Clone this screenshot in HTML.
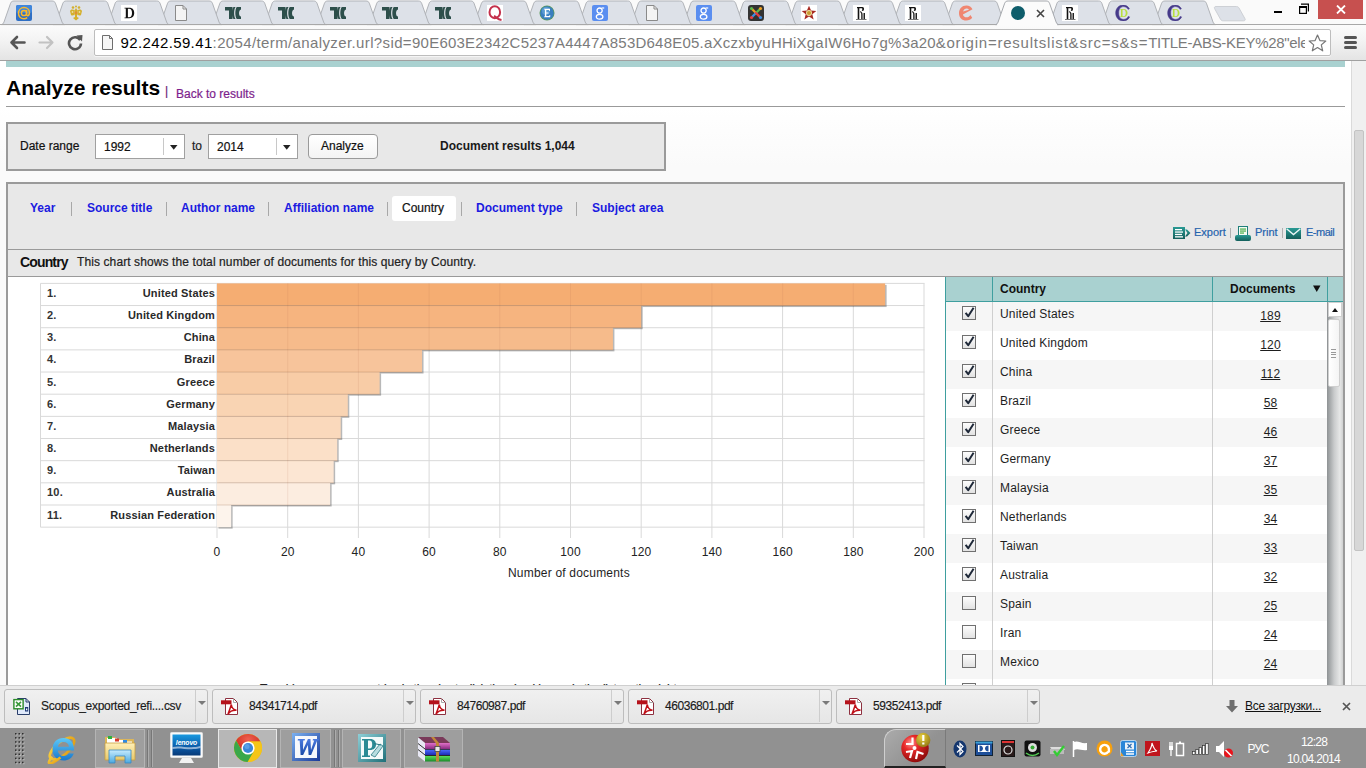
<!DOCTYPE html><html><head><meta charset="utf-8"><style>
*{box-sizing:border-box}
html,body{margin:0;padding:0;width:1366px;height:768px;overflow:hidden;background:#fff;font-family:"Liberation Sans",sans-serif}
.a{position:absolute}
.t{position:absolute;white-space:nowrap;line-height:1}
#frame{left:0;top:0;width:1366px;height:25px;background:#fafafa}
#toolbar{left:0;top:24px;width:1366px;height:37px;background:linear-gradient(#fbfbfb,#f3f3f3 45%,#e4e4e4);border-top:1px solid #a8a8a8;border-bottom:1px solid #a0a0a0}
#omni{left:94px;top:29px;width:1237px;height:27px;background:#fff;border:1px solid #bdbdbd;border-radius:2px;overflow:hidden;box-shadow:0 1px 0 rgba(255,255,255,.6)}
#url{left:25px;top:4px;font-size:15px;color:#7b7b7b;white-space:nowrap;letter-spacing:0.14px;line-height:17px}
#url b{font-weight:normal;color:#000}
#page{left:0;top:61px;width:1366px;height:624px;background:#fff;overflow:hidden}
#page .t:not([style*="bold"]){-webkit-text-stroke:0.2px currentColor}
#shelf{left:0;top:685px;width:1366px;height:43px;background:#ebebeb;border-top:1px solid #cfcfcf}
#taskbar{left:0;top:728px;width:1366px;height:40px;background:#919191}
.dl{position:absolute;top:3px;height:35px;width:204px;border:1px solid #bdbdbd;border-radius:3px;background:linear-gradient(#f0f0f0,#e6e6e6)}
.dl .nm{position:absolute;left:36px;top:9px;-webkit-text-stroke:0.15px currentColor;font-size:12px;line-height:14px;color:#1a1a1a;letter-spacing:-0.45px}
.dl .dv{position:absolute;left:190px;top:0;width:1px;height:32px;background:#cdcdcd}
.dl .ar{position:absolute;left:193px;top:11px;width:0;height:0;border-left:4px solid transparent;border-right:4px solid transparent;border-top:4px solid #7a7a7a}
.tb{position:absolute;top:1px;height:39px;border:1px solid #a9a9a9;background:rgba(255,255,255,.18)}
</style></head><body>
<div id="frame" class="a"></div>
<div id="toolbar" class="a"></div>
<svg class="a" style="left:0;top:0" width="1366" height="26" viewBox="0 0 1366 26"><path d="M1152.0,24.6 C1153.5,24.6 1154.4,23.6 1155.0,22 L1161.6,3.2 C1162.2,1.7 1163.2,1 1165.0,1 L1203.0,1 C1204.8,1 1205.8,1.7 1206.4,3.2 L1213.0,22 C1213.6,23.6 1214.5,24.6 1216.0,24.6 Z" fill="#dde1e8" stroke="#b0b3b8" stroke-width="1"/><path d="M1099.7,24.6 C1101.2,24.6 1102.1,23.6 1102.7,22 L1109.3,3.2 C1109.9,1.7 1110.9,1 1112.7,1 L1150.7,1 C1152.5,1 1153.5,1.7 1154.1,3.2 L1160.7,22 C1161.3,23.6 1162.2,24.6 1163.7,24.6 Z" fill="#dde1e8" stroke="#b0b3b8" stroke-width="1"/><path d="M1047.4,24.6 C1048.9,24.6 1049.8,23.6 1050.4,22 L1057.0,3.2 C1057.6,1.7 1058.6,1 1060.4,1 L1098.4,1 C1100.2,1 1101.2,1.7 1101.8,3.2 L1108.4,22 C1109.0,23.6 1109.9,24.6 1111.4,24.6 Z" fill="#dde1e8" stroke="#b0b3b8" stroke-width="1"/><path d="M942.8,24.6 C944.3,24.6 945.2,23.6 945.8,22 L952.4,3.2 C953.0,1.7 954.0,1 955.8,1 L993.8,1 C995.6,1 996.6,1.7 997.2,3.2 L1003.8,22 C1004.4,23.6 1005.3,24.6 1006.8,24.6 Z" fill="#dde1e8" stroke="#b0b3b8" stroke-width="1"/><path d="M890.4,24.6 C891.9,24.6 892.8,23.6 893.4,22 L900.0,3.2 C900.6,1.7 901.6,1 903.4,1 L941.4,1 C943.2,1 944.2,1.7 944.8,3.2 L951.4,22 C952.0,23.6 952.9,24.6 954.4,24.6 Z" fill="#dde1e8" stroke="#b0b3b8" stroke-width="1"/><path d="M838.1,24.6 C839.6,24.6 840.5,23.6 841.1,22 L847.7,3.2 C848.3,1.7 849.3,1 851.1,1 L889.1,1 C890.9,1 891.9,1.7 892.5,3.2 L899.1,22 C899.7,23.6 900.6,24.6 902.1,24.6 Z" fill="#dde1e8" stroke="#b0b3b8" stroke-width="1"/><path d="M785.8,24.6 C787.3,24.6 788.2,23.6 788.8,22 L795.4,3.2 C796.0,1.7 797.0,1 798.8,1 L836.8,1 C838.6,1 839.6,1.7 840.2,3.2 L846.8,22 C847.4,23.6 848.3,24.6 849.8,24.6 Z" fill="#dde1e8" stroke="#b0b3b8" stroke-width="1"/><path d="M733.5,24.6 C735.0,24.6 735.9,23.6 736.5,22 L743.1,3.2 C743.7,1.7 744.7,1 746.5,1 L784.5,1 C786.3,1 787.3,1.7 787.9,3.2 L794.5,22 C795.1,23.6 796.0,24.6 797.5,24.6 Z" fill="#dde1e8" stroke="#b0b3b8" stroke-width="1"/><path d="M681.2,24.6 C682.7,24.6 683.6,23.6 684.2,22 L690.8,3.2 C691.4,1.7 692.4,1 694.2,1 L732.2,1 C734.0,1 735.0,1.7 735.6,3.2 L742.2,22 C742.8,23.6 743.7,24.6 745.2,24.6 Z" fill="#dde1e8" stroke="#b0b3b8" stroke-width="1"/><path d="M628.8,24.6 C630.3,24.6 631.2,23.6 631.8,22 L638.4,3.2 C639.0,1.7 640.0,1 641.8,1 L679.8,1 C681.6,1 682.6,1.7 683.2,3.2 L689.8,22 C690.4,23.6 691.3,24.6 692.8,24.6 Z" fill="#dde1e8" stroke="#b0b3b8" stroke-width="1"/><path d="M576.5,24.6 C578.0,24.6 578.9,23.6 579.5,22 L586.1,3.2 C586.7,1.7 587.7,1 589.5,1 L627.5,1 C629.3,1 630.3,1.7 630.9,3.2 L637.5,22 C638.1,23.6 639.0,24.6 640.5,24.6 Z" fill="#dde1e8" stroke="#b0b3b8" stroke-width="1"/><path d="M524.2,24.6 C525.7,24.6 526.6,23.6 527.2,22 L533.8,3.2 C534.4,1.7 535.4,1 537.2,1 L575.2,1 C577.0,1 578.0,1.7 578.6,3.2 L585.2,22 C585.8,23.6 586.7,24.6 588.2,24.6 Z" fill="#dde1e8" stroke="#b0b3b8" stroke-width="1"/><path d="M471.9,24.6 C473.4,24.6 474.3,23.6 474.9,22 L481.5,3.2 C482.1,1.7 483.1,1 484.9,1 L522.9,1 C524.7,1 525.7,1.7 526.3,3.2 L532.9,22 C533.5,23.6 534.4,24.6 535.9,24.6 Z" fill="#dde1e8" stroke="#b0b3b8" stroke-width="1"/><path d="M419.6,24.6 C421.1,24.6 422.0,23.6 422.6,22 L429.2,3.2 C429.8,1.7 430.8,1 432.6,1 L470.6,1 C472.4,1 473.4,1.7 474.0,3.2 L480.6,22 C481.2,23.6 482.1,24.6 483.6,24.6 Z" fill="#dde1e8" stroke="#b0b3b8" stroke-width="1"/><path d="M367.2,24.6 C368.7,24.6 369.6,23.6 370.2,22 L376.8,3.2 C377.4,1.7 378.4,1 380.2,1 L418.2,1 C420.0,1 421.0,1.7 421.6,3.2 L428.2,22 C428.8,23.6 429.7,24.6 431.2,24.6 Z" fill="#dde1e8" stroke="#b0b3b8" stroke-width="1"/><path d="M314.9,24.6 C316.4,24.6 317.3,23.6 317.9,22 L324.5,3.2 C325.1,1.7 326.1,1 327.9,1 L365.9,1 C367.7,1 368.7,1.7 369.3,3.2 L375.9,22 C376.5,23.6 377.4,24.6 378.9,24.6 Z" fill="#dde1e8" stroke="#b0b3b8" stroke-width="1"/><path d="M262.6,24.6 C264.1,24.6 265.0,23.6 265.6,22 L272.2,3.2 C272.8,1.7 273.8,1 275.6,1 L313.6,1 C315.4,1 316.4,1.7 317.0,3.2 L323.6,22 C324.2,23.6 325.1,24.6 326.6,24.6 Z" fill="#dde1e8" stroke="#b0b3b8" stroke-width="1"/><path d="M210.3,24.6 C211.8,24.6 212.7,23.6 213.3,22 L219.9,3.2 C220.5,1.7 221.5,1 223.3,1 L261.3,1 C263.1,1 264.1,1.7 264.7,3.2 L271.3,22 C271.9,23.6 272.8,24.6 274.3,24.6 Z" fill="#dde1e8" stroke="#b0b3b8" stroke-width="1"/><path d="M158.0,24.6 C159.5,24.6 160.4,23.6 161.0,22 L167.6,3.2 C168.2,1.7 169.2,1 171.0,1 L209.0,1 C210.8,1 211.8,1.7 212.4,3.2 L219.0,22 C219.6,23.6 220.5,24.6 222.0,24.6 Z" fill="#dde1e8" stroke="#b0b3b8" stroke-width="1"/><path d="M105.6,24.6 C107.1,24.6 108.0,23.6 108.6,22 L115.2,3.2 C115.8,1.7 116.8,1 118.6,1 L156.6,1 C158.4,1 159.4,1.7 160.0,3.2 L166.6,22 C167.2,23.6 168.1,24.6 169.6,24.6 Z" fill="#dde1e8" stroke="#b0b3b8" stroke-width="1"/><path d="M53.3,24.6 C54.8,24.6 55.7,23.6 56.3,22 L62.9,3.2 C63.5,1.7 64.5,1 66.3,1 L104.3,1 C106.1,1 107.1,1.7 107.7,3.2 L114.3,22 C114.9,23.6 115.8,24.6 117.3,24.6 Z" fill="#dde1e8" stroke="#b0b3b8" stroke-width="1"/><path d="M1.0,24.6 C2.5,24.6 3.4,23.6 4.0,22 L10.6,3.2 C11.2,1.7 12.2,1 14.0,1 L52.0,1 C53.8,1 54.8,1.7 55.4,3.2 L62.0,22 C62.6,23.6 63.5,24.6 65.0,24.6 Z" fill="#dde1e8" stroke="#b0b3b8" stroke-width="1"/><line x1="0" y1="24.5" x2="1366" y2="24.5" stroke="#a8a8a8" stroke-width="1"/><path d="M995.1,24.6 C996.6,24.6 997.5,23.6 998.1,22 L1004.7,3.2 C1005.3,1.7 1006.3,1 1008.1,1 L1046.1,1 C1047.9,1 1048.9,1.7 1049.5,3.2 L1056.1,22 C1056.7,23.6 1057.6,24.6 1059.1,24.6 Z" fill="#fbfbfb" stroke="#a6a9ae" stroke-width="1"/><rect x="997.1" y="24" width="60" height="2" fill="#fbfbfb"/><path d="M1216,6.5 C1214.5,6.5 1214,7.5 1214.6,8.6 L1220.6,19.4 C1221.2,20.4 1222,20.8 1223.2,20.8 L1243.5,20.8 C1245,20.8 1245.6,19.8 1245,18.8 L1239,8 C1238.4,7 1237.6,6.5 1236.4,6.5 Z" fill="#dde1e8" stroke="#cdd0d5" stroke-width="1"/></svg>
<svg class="a" style="left:16px;top:5px" width="16" height="16" viewBox="0 0 16 16"><rect x="0" y="0" width="16" height="16" rx="2" fill="#2f6fc4"/><rect x="0" y="0" width="16" height="8" rx="2" fill="#3f86dc"/><path d="M11.2,12.6 C10.2,13.3 9.2,13.7 8,13.7 C4.8,13.7 2.5,11.3 2.5,8.2 C2.5,5 4.9,2.6 8,2.6 C11.1,2.6 13.4,4.8 13.4,7.6 C13.4,9.6 12.5,10.8 11.5,10.8 C10.7,10.8 10.6,10.1 10.6,9.2 V5" fill="none" stroke="#fbb829" stroke-width="1.5"/><circle cx="8" cy="8" r="2.6" fill="none" stroke="#fbb829" stroke-width="1.5"/></svg>
<svg class="a" style="left:68px;top:5px" width="16" height="16" viewBox="0 0 16 16"><g fill="#d4b02c"><path d="M8,3 L9.5,5.5 L9,12 L8,14 L7,12 L6.5,5.5 Z"/><path d="M6.5,5 C4,4 2.5,4.5 2,6 L3,10 C4,11 5.5,10.5 6.8,9.5 Z"/><path d="M9.5,5 C12,4 13.5,4.5 14,6 L13,10 C12,11 10.5,10.5 9.2,9.5 Z"/><circle cx="5" cy="2.5" r="1.3"/><circle cx="11" cy="2.5" r="1.3"/><circle cx="8" cy="1.5" r="1"/><path d="M5,13 L8,11.5 L11,13 L8,15.5 Z"/></g><g fill="#fff" opacity=".55"><circle cx="4.5" cy="7" r=".9"/><circle cx="11.5" cy="7" r=".9"/></g><circle cx="8" cy="8" r="1.4" fill="#e09030"/></svg>
<svg class="a" style="left:121px;top:5px" width="16" height="16" viewBox="0 0 16 16"><rect x="0" y="0" width="16" height="16" fill="#fff"/><path d="M3.5,2.8 H8.3 C11.6,2.8 13.2,5 13.2,8 C13.2,11 11.6,13.2 8.3,13.2 H3.5 V12.4 H4.8 V3.6 H3.5 Z M6.9,3.7 V12.3 H8.2 C10.2,12.3 11,10.6 11,8 C11,5.4 10.2,3.7 8.2,3.7 Z" fill="#111"/></svg>
<svg class="a" style="left:173px;top:5px" width="16" height="16" viewBox="0 0 16 16"><path d="M2.5,0.5 H10 L13.5,4 V15.5 H2.5 Z" fill="#f4f4f4" stroke="#8a8a8a"/><path d="M10,0.5 V4 H13.5" fill="none" stroke="#8a8a8a"/></svg>
<svg class="a" style="left:225px;top:5px" width="16" height="16" viewBox="0 0 16 16"><path d="M0,2 H7.5 V14 H4 V5.5 H0 Z" fill="#2d4f4b"/><path d="M8.6,2 C6.3,4.3 6.3,11.7 8.6,14 H10.6 C8.6,11.7 8.6,4.3 10.6,2 Z" fill="#2d4f4b"/><path d="M11.8,2 C9.8,4.3 9.8,11.7 11.8,14 H16 V11.6 C13.4,11 13.4,5 16,4.4 V2 Z" fill="#2d4f4b"/></svg>
<svg class="a" style="left:278px;top:5px" width="16" height="16" viewBox="0 0 16 16"><path d="M0,2 H7.5 V14 H4 V5.5 H0 Z" fill="#2d4f4b"/><path d="M8.6,2 C6.3,4.3 6.3,11.7 8.6,14 H10.6 C8.6,11.7 8.6,4.3 10.6,2 Z" fill="#2d4f4b"/><path d="M11.8,2 C9.8,4.3 9.8,11.7 11.8,14 H16 V11.6 C13.4,11 13.4,5 16,4.4 V2 Z" fill="#2d4f4b"/></svg>
<svg class="a" style="left:330px;top:5px" width="16" height="16" viewBox="0 0 16 16"><path d="M0,2 H7.5 V14 H4 V5.5 H0 Z" fill="#2d4f4b"/><path d="M8.6,2 C6.3,4.3 6.3,11.7 8.6,14 H10.6 C8.6,11.7 8.6,4.3 10.6,2 Z" fill="#2d4f4b"/><path d="M11.8,2 C9.8,4.3 9.8,11.7 11.8,14 H16 V11.6 C13.4,11 13.4,5 16,4.4 V2 Z" fill="#2d4f4b"/></svg>
<svg class="a" style="left:382px;top:5px" width="16" height="16" viewBox="0 0 16 16"><path d="M0,2 H7.5 V14 H4 V5.5 H0 Z" fill="#2d4f4b"/><path d="M8.6,2 C6.3,4.3 6.3,11.7 8.6,14 H10.6 C8.6,11.7 8.6,4.3 10.6,2 Z" fill="#2d4f4b"/><path d="M11.8,2 C9.8,4.3 9.8,11.7 11.8,14 H16 V11.6 C13.4,11 13.4,5 16,4.4 V2 Z" fill="#2d4f4b"/></svg>
<svg class="a" style="left:435px;top:5px" width="16" height="16" viewBox="0 0 16 16"><path d="M0,2 H7.5 V14 H4 V5.5 H0 Z" fill="#2d4f4b"/><path d="M8.6,2 C6.3,4.3 6.3,11.7 8.6,14 H10.6 C8.6,11.7 8.6,4.3 10.6,2 Z" fill="#2d4f4b"/><path d="M11.8,2 C9.8,4.3 9.8,11.7 11.8,14 H16 V11.6 C13.4,11 13.4,5 16,4.4 V2 Z" fill="#2d4f4b"/></svg>
<svg class="a" style="left:487px;top:5px" width="16" height="16" viewBox="0 0 16 16"><rect width="16" height="16" fill="#fff"/><ellipse cx="7.8" cy="7.2" rx="5.3" ry="6" fill="none" stroke="#c4304c" stroke-width="2"/><path d="M7,11 C9,12 11,14.5 14.5,15" fill="none" stroke="#c4304c" stroke-width="2"/></svg>
<svg class="a" style="left:539px;top:5px" width="16" height="16" viewBox="0 0 16 16"><circle cx="8" cy="8" r="7.5" fill="#5a9a5a"/><circle cx="8" cy="8" r="6.8" fill="#3a7fc0"/><circle cx="7" cy="6" r="4" fill="#6aaee0" opacity=".6"/><path d="M5,3.8 H11 V6 H10.2 V5 H7.3 V7.5 H9.5 V8.5 H7.3 V11 H10.4 V10 H11.2 V12.2 H5 V11.5 H5.9 V4.5 H5 Z" fill="#fff"/></svg>
<svg class="a" style="left:592px;top:5px" width="16" height="16" viewBox="0 0 16 16"><rect width="16" height="16" rx="2" fill="#5a8ef0"/><circle cx="7.6" cy="5.6" r="2.6" fill="none" stroke="#fff" stroke-width="1.3"/><ellipse cx="7.6" cy="11.8" rx="3.3" ry="2.4" fill="none" stroke="#fff" stroke-width="1.3"/><path d="M9.5,3 H12.2" stroke="#fff" stroke-width="1.2"/></svg>
<svg class="a" style="left:644px;top:5px" width="16" height="16" viewBox="0 0 16 16"><path d="M2.5,0.5 H10 L13.5,4 V15.5 H2.5 Z" fill="#f4f4f4" stroke="#8a8a8a"/><path d="M10,0.5 V4 H13.5" fill="none" stroke="#8a8a8a"/></svg>
<svg class="a" style="left:696px;top:5px" width="16" height="16" viewBox="0 0 16 16"><rect width="16" height="16" rx="2" fill="#5a8ef0"/><circle cx="7.6" cy="5.6" r="2.6" fill="none" stroke="#fff" stroke-width="1.3"/><ellipse cx="7.6" cy="11.8" rx="3.3" ry="2.4" fill="none" stroke="#fff" stroke-width="1.3"/><path d="M9.5,3 H12.2" stroke="#fff" stroke-width="1.2"/></svg>
<svg class="a" style="left:748px;top:5px" width="16" height="16" viewBox="0 0 16 16"><rect width="16" height="16" rx="3" fill="#333"/><g stroke-width="2.3" stroke-linecap="round" fill="none"><path d="M4,4 L8,8" stroke="#f0a020"/><path d="M12,4 L8,8" stroke="#5ab84a"/><path d="M4,12 L8,8" stroke="#3a8ee6"/><path d="M12,12 L8,8" stroke="#e84040"/></g><g fill="#fff" opacity="0"><circle cx="8" cy="8" r="1"/></g><circle cx="3.5" cy="3.5" r="1.6" fill="#5ab84a"/><circle cx="12.5" cy="3.5" r="1.6" fill="#f0a020"/><circle cx="3.5" cy="12.5" r="1.6" fill="#e84040"/><circle cx="12.5" cy="12.5" r="1.6" fill="#3a8ee6"/></svg>
<svg class="a" style="left:801px;top:5px" width="16" height="16" viewBox="0 0 16 16"><rect width="16" height="16" fill="#fff"/><path d="M8,0.8 L10.1,5.6 L15.3,5.9 L11.3,9.3 L12.6,14.5 L8,11.6 L3.4,14.5 L4.7,9.3 L0.7,5.9 L5.9,5.6 Z" fill="#a82a22"/><circle cx="8" cy="8" r="3" fill="#f0e0a0"/><circle cx="8" cy="8" r="2" fill="#c89a30"/></svg>
<svg class="a" style="left:853px;top:5px" width="16" height="16" viewBox="0 0 16 16"><rect width="16" height="16" fill="#fff"/><path d="M4,2 H9.5 C11.5,2 11.5,5.5 9.8,6 L8.7,5.4 C9.6,4.8 9.6,3.2 8.8,3.2 H6.3 V14 H4.7 V3.2 H4 Z" fill="#111"/><path d="M7.2,6 C8.5,6.5 9.5,7.5 9.6,9 V14 H8.2 V9.2 C8.2,8.2 7.8,7.6 7.2,7.3 Z" fill="#222"/><path d="M10.5,8 H12 V14 H10.5 Z" fill="#222"/><path d="M3,14 H13.5 V14.8 H3 Z" fill="#555"/></svg>
<svg class="a" style="left:905px;top:5px" width="16" height="16" viewBox="0 0 16 16"><rect width="16" height="16" fill="#fff"/><path d="M4,2 H9.5 C11.5,2 11.5,5.5 9.8,6 L8.7,5.4 C9.6,4.8 9.6,3.2 8.8,3.2 H6.3 V14 H4.7 V3.2 H4 Z" fill="#111"/><path d="M7.2,6 C8.5,6.5 9.5,7.5 9.6,9 V14 H8.2 V9.2 C8.2,8.2 7.8,7.6 7.2,7.3 Z" fill="#222"/><path d="M10.5,8 H12 V14 H10.5 Z" fill="#222"/><path d="M3,14 H13.5 V14.8 H3 Z" fill="#555"/></svg>
<svg class="a" style="left:1062px;top:5px" width="16" height="16" viewBox="0 0 16 16"><rect width="16" height="16" fill="#fff"/><path d="M4,2 H9.5 C11.5,2 11.5,5.5 9.8,6 L8.7,5.4 C9.6,4.8 9.6,3.2 8.8,3.2 H6.3 V14 H4.7 V3.2 H4 Z" fill="#111"/><path d="M7.2,6 C8.5,6.5 9.5,7.5 9.6,9 V14 H8.2 V9.2 C8.2,8.2 7.8,7.6 7.2,7.3 Z" fill="#222"/><path d="M10.5,8 H12 V14 H10.5 Z" fill="#222"/><path d="M3,14 H13.5 V14.8 H3 Z" fill="#555"/></svg>
<svg class="a" style="left:958px;top:5px" width="16" height="16" viewBox="0 0 16 16"><path d="M14.5,4.2 C13.4,2 11.3,0.5 8.4,0.5 C4,0.5 1,3.8 1,8.2 C1,12.6 4,15.6 8.3,15.6 C10.8,15.6 12.8,14.6 14.2,12.8 L12.4,10 C11.5,11.6 10.1,12.3 8.7,12.3 C6.6,12.3 5.3,11.1 4.9,9.4 Z M5.1,6.5 C5.7,4.6 7,3.6 8.6,3.6 C9.7,3.6 10.5,4 11,4.8 Z" fill="#f08670"/></svg>
<svg class="a" style="left:1010px;top:5px" width="16" height="16" viewBox="0 0 16 16"><circle cx="8" cy="8" r="7" fill="#0e5d6b"/></svg>
<svg class="a" style="left:1115px;top:5px" width="16" height="16" viewBox="0 0 16 16"><g transform="translate(8 8) scale(1.14) translate(-8 -8)"><path d="M13.6,4.3 C12.6,2.3 10.7,1 8.2,1 C4.4,1 1.6,4 1.6,8 C1.6,12 4.4,15 8.2,15 C10.8,15 12.8,13.6 13.8,11.4 L12.6,11 C11.8,12.6 10.4,13.6 8.5,13.6 C5.9,13.6 4.2,11.5 4.2,8 C4.2,4.5 5.9,2.4 8.5,2.4 C10.2,2.4 11.6,3.3 12.4,4.8 Z" fill="#463a8a" stroke="#463a8a" stroke-width=".5"/><path d="M5.4,4.5 H8.6 C10.8,4.5 12,6 12,8 C12,10 10.8,11.5 8.6,11.5 H5.4 V11 H6.2 V5 H5.4 Z M7.6,5.2 V10.8 H8.5 C9.8,10.8 10.4,9.6 10.4,8 C10.4,6.4 9.8,5.2 8.5,5.2 Z" fill="#b8e040"/></g></svg>
<svg class="a" style="left:1167px;top:5px" width="16" height="16" viewBox="0 0 16 16"><g transform="translate(8 8) scale(1.14) translate(-8 -8)"><path d="M13.6,4.3 C12.6,2.3 10.7,1 8.2,1 C4.4,1 1.6,4 1.6,8 C1.6,12 4.4,15 8.2,15 C10.8,15 12.8,13.6 13.8,11.4 L12.6,11 C11.8,12.6 10.4,13.6 8.5,13.6 C5.9,13.6 4.2,11.5 4.2,8 C4.2,4.5 5.9,2.4 8.5,2.4 C10.2,2.4 11.6,3.3 12.4,4.8 Z" fill="#463a8a" stroke="#463a8a" stroke-width=".5"/><path d="M5.4,4.5 H8.6 C10.8,4.5 12,6 12,8 C12,10 10.8,11.5 8.6,11.5 H5.4 V11 H6.2 V5 H5.4 Z M7.6,5.2 V10.8 H8.5 C9.8,10.8 10.4,9.6 10.4,8 C10.4,6.4 9.8,5.2 8.5,5.2 Z" fill="#b8e040"/></g></svg>
<svg class="a" style="left:1036px;top:9px" width="9" height="9" viewBox="0 0 9 9"><path d="M1,1 L8,8 M8,1 L1,8" stroke="#444" stroke-width="1.6"/></svg>
<div class="a" style="left:1274px;top:11px;width:8px;height:2px;background:#000"></div>
<svg class="a" style="left:1298px;top:3px" width="12" height="11" viewBox="0 0 12 11"><rect x="1.6" y="3.6" width="6.8" height="6.8" fill="none" stroke="#000" stroke-width="1.2"/><rect x="1" y="3" width="8" height="2" fill="#000"/><path d="M3,1.1 H10.4 V8.5" fill="none" stroke="#000" stroke-width="1.2"/></svg>
<div class="a" style="left:1318px;top:0;width:45px;height:19px;background:#c7504f"></div>
<svg class="a" style="left:1336px;top:5px" width="10" height="9" viewBox="0 0 10 9"><path d="M1,0.5 L9,8.5 M9,0.5 L1,8.5" stroke="#fff" stroke-width="1.8"/></svg>
<svg class="a" style="left:9px;top:35px" width="17" height="15" viewBox="0 0 17 15"><path d="M2.5,7.5 H15.5 M8,2 L2.5,7.5 L8,13" fill="none" stroke="#555" stroke-width="2.6" stroke-linecap="round" stroke-linejoin="round"/></svg>
<svg class="a" style="left:38px;top:35px" width="17" height="15" viewBox="0 0 17 15"><path d="M1.5,7.5 H14.5 M9,2 L14.5,7.5 L9,13" fill="none" stroke="#c2c2c2" stroke-width="2.2" stroke-linecap="round" stroke-linejoin="round"/></svg>
<svg class="a" style="left:67px;top:34px" width="17" height="17" viewBox="0 0 17 17"><path d="M13.2,6.2 A6,6 0 1 0 14,9.5" fill="none" stroke="#555" stroke-width="2.6"/><path d="M9.5,1.5 L15.5,1 L15,7.5 Z" fill="#555"/></svg>
<div id="omni" class="a"></div>
<div class="a" style="left:95px;top:30px;width:1210px;height:25px;overflow:hidden;font-size:15px;color:#7b7b7b;line-height:17px"><div class="t" style="left:25.5px;top:3.6px;letter-spacing:0.376px;line-height:17px"><span style="color:#000">92.242.59.41</span>:2054/term/analyzer.url?sid=</div><div class="t" style="left:317px;top:3.6px;letter-spacing:0.23px;line-height:17px">90E603E2342C5237A4447A853D648E05.aXczxbyuHHiXgaIW6Ho7g%3a20</div><div class="t" style="left:840.7px;top:3.6px;letter-spacing:0.786px;line-height:17px">&amp;origin=resultslist&amp;src=s&amp;s=</div><div class="t" style="left:1053.2px;top:3.6px;letter-spacing:-0.3px;line-height:17px">TITLE-ABS-KEY%28"ele</div></div>
<svg class="a" style="left:101px;top:35px" width="13" height="16" viewBox="0 0 13 16"><path d="M1.5,0.5 H8.5 L11.5,3.5 V14.5 H1.5 Z" fill="#f6f6f6" stroke="#6e6e6e"/><path d="M8.5,0.5 V3.5 H11.5" fill="none" stroke="#6e6e6e"/></svg>
<svg class="a" style="left:1308px;top:34px" width="19" height="18" viewBox="0 0 19 18"><path d="M9.5,1 L11.9,6.6 L17.8,7 L13.3,10.9 L14.7,16.8 L9.5,13.6 L4.3,16.8 L5.7,10.9 L1.2,7 L7.1,6.6 Z" fill="#fff" stroke="#777" stroke-width="1.2" stroke-linejoin="round"/></svg>
<div class="a" style="left:1344px;top:36px;width:13px;height:3px;border-radius:1.5px;background:#555"></div>
<div class="a" style="left:1344px;top:41px;width:13px;height:3px;border-radius:1.5px;background:#555"></div>
<div class="a" style="left:1344px;top:46px;width:13px;height:3px;border-radius:1.5px;background:#555"></div>
<div id="page" class="a">
<div class="a" style="left:0px;top:46px;width:1351px;height:578px;background:linear-gradient(#fff,#fafafa 60px)"></div>
<div class="a" style="left:6px;top:0px;width:1339px;height:6px;background:#a9d1d0"></div>
<div class="t" style="left:6px;top:16.22px;font-size:21px;font-weight:bold;color:#000">Analyze results</div>
<div class="t" style="left:165px;top:24.34px;font-size:12px;color:#6a1a7a">|</div>
<div class="t" style="left:176px;top:26.84px;font-size:12px;color:#7d1e8c">Back to results</div>
<div class="a" style="left:6px;top:45px;width:1339px;height:1px;background:#9a9a9a"></div>
<div class="a" style="left:6px;top:61px;width:660px;height:49px;background:#e8e8e8;border:2px solid #9a9a9a"></div>
<div class="t" style="left:20px;top:78.84px;font-size:12px;color:#111">Date range</div>
<div class="a" style="left:95px;top:73px;width:90px;height:25px;background:#fff;border:1px solid #a0a0a0"></div>
<div class="t" style="left:104px;top:79.84px;font-size:12px;color:#111">1992</div>
<div class="a" style="left:163px;top:77px;width:1px;height:17px;background:#c8c8c8"></div>
<svg class="a" style="left:170px;top:84px" width="8" height="5" viewBox="0 0 8 5"><path d="M0,0 H7.5 L3.75,4.8 Z" fill="#222"/></svg>
<div class="a" style="left:208px;top:73px;width:90px;height:25px;background:#fff;border:1px solid #a0a0a0"></div>
<div class="t" style="left:217px;top:79.84px;font-size:12px;color:#111">2014</div>
<div class="a" style="left:276px;top:77px;width:1px;height:17px;background:#c8c8c8"></div>
<svg class="a" style="left:283px;top:84px" width="8" height="5" viewBox="0 0 8 5"><path d="M0,0 H7.5 L3.75,4.8 Z" fill="#222"/></svg>
<div class="t" style="left:192px;top:78.84px;font-size:12px;color:#222">to</div>
<div class="a" style="left:308px;top:73px;width:70px;height:25px;background:linear-gradient(#fff,#f4f4f4);border:1px solid #9a9a9a;border-radius:4px"></div>
<div class="t" style="left:321px;top:78.84px;font-size:12px;color:#111">Analyze</div>
<div class="t" style="left:440px;top:78.84px;font-size:12px;font-weight:bold;color:#1a1a1a">Document results 1,044</div>
<div class="a" style="left:6px;top:121px;width:1339px;height:520px;background:#e8e8e8;border:2px solid #9a9a9a"></div>
<div class="t" style="left:30px;top:140.84px;font-size:12px;font-weight:bold;color:#1b1be0">Year</div>
<div class="t" style="left:87px;top:140.84px;font-size:12px;font-weight:bold;color:#1b1be0">Source title</div>
<div class="t" style="left:181px;top:140.84px;font-size:12px;font-weight:bold;color:#1b1be0">Author name</div>
<div class="t" style="left:284px;top:140.84px;font-size:12px;font-weight:bold;color:#1b1be0">Affiliation name</div>
<div class="a" style="left:392px;top:135px;width:64px;height:25px;background:#fff;border-radius:3px"></div>
<div class="t" style="left:402px;top:140.84px;font-size:12px;color:#111">Country</div>
<div class="t" style="left:476px;top:140.84px;font-size:12px;font-weight:bold;color:#1b1be0">Document type</div>
<div class="t" style="left:592px;top:140.84px;font-size:12px;font-weight:bold;color:#1b1be0">Subject area</div>
<div class="a" style="left:71px;top:141px;width:1px;height:14px;background:#a8a8a8"></div>
<div class="a" style="left:166px;top:141px;width:1px;height:14px;background:#a8a8a8"></div>
<div class="a" style="left:268px;top:141px;width:1px;height:14px;background:#a8a8a8"></div>
<div class="a" style="left:387px;top:141px;width:1px;height:14px;background:#a8a8a8"></div>
<div class="a" style="left:461px;top:141px;width:1px;height:14px;background:#a8a8a8"></div>
<div class="a" style="left:576px;top:141px;width:1px;height:14px;background:#a8a8a8"></div>
<svg class="a" style="left:1173px;top:166px" width="18" height="12" viewBox="0 0 18 12"><defs><linearGradient id="tg" x1="0" y1="0" x2="0" y2="1"><stop offset="0" stop-color="#2a9a94"/><stop offset="1" stop-color="#135f5b"/></linearGradient></defs><rect x="0" y="0" width="12" height="12" fill="url(#tg)"/><g fill="#fff"><rect x="2" y="2" width="7" height="1.3"/><rect x="2" y="4.4" width="8" height="1.3"/><rect x="2" y="6.8" width="7" height="1.3"/><rect x="2" y="9.2" width="8" height="1.3"/></g><path d="M12,2.5 H14 L17.5,6 L14,9.5 H12 L14.5,6 Z" fill="url(#tg)"/></svg>
<div class="t" style="left:1194px;top:165.69px;font-size:11px;color:#2563ad">Export</div>
<div class="a" style="left:1230px;top:167px;width:1px;height:10px;background:#b0b0b0"></div>
<svg class="a" style="left:1235px;top:165px" width="16" height="15" viewBox="0 0 16 15"><rect x="3.5" y="0.5" width="9" height="9" fill="#f4fbf4" stroke="#1f7f7a"/><g fill="#3aa53a"><rect x="5" y="2.5" width="6" height="1.1"/><rect x="5" y="4.5" width="6" height="1.1"/><rect x="5" y="6.5" width="4" height="1.1"/></g><rect x="0" y="9" width="16" height="6" rx="2" fill="url(#tg)"/></svg>
<div class="t" style="left:1255px;top:165.69px;font-size:11px;color:#2563ad">Print</div>
<div class="a" style="left:1282px;top:167px;width:1px;height:10px;background:#b0b0b0"></div>
<svg class="a" style="left:1286px;top:167px" width="15" height="11" viewBox="0 0 15 11"><rect x="0" y="0" width="15" height="11" fill="url(#tg)"/><path d="M0.6,0.8 L7.5,6.6 L14.4,0.8" fill="none" stroke="#eaf6f6" stroke-width="1.4"/></svg>
<div class="t" style="left:1306px;top:165.69px;font-size:11px;color:#2563ad;letter-spacing:-0.5px">E-mail</div>
<div class="a" style="left:8px;top:188px;width:1335px;height:1px;background:#9a9a9a"></div>
<div class="t" style="left:20px;top:194.15px;font-size:14px;font-weight:bold;color:#111;letter-spacing:-0.85px">Country</div>
<div class="t" style="left:77px;top:194.84px;font-size:12px;color:#222;letter-spacing:0.1px">This chart shows the total number of documents for this query by Country.</div>
<div class="a" style="left:8px;top:215px;width:1335px;height:1px;background:#9a9a9a"></div>
<div class="a" style="left:8px;top:216px;width:1335px;height:420px;background:#fff"></div>
<svg class="a" style="left:0;top:0" width="1351" height="624" viewBox="0 61 1351 624"><line x1="40.5" y1="283.40" x2="924.5" y2="283.40" stroke="#d9d9d9" stroke-width="1"/><line x1="40.5" y1="305.56" x2="924.5" y2="305.56" stroke="#d9d9d9" stroke-width="1"/><line x1="40.5" y1="327.72" x2="924.5" y2="327.72" stroke="#d9d9d9" stroke-width="1"/><line x1="40.5" y1="349.88" x2="924.5" y2="349.88" stroke="#d9d9d9" stroke-width="1"/><line x1="40.5" y1="372.04" x2="924.5" y2="372.04" stroke="#d9d9d9" stroke-width="1"/><line x1="40.5" y1="394.20" x2="924.5" y2="394.20" stroke="#d9d9d9" stroke-width="1"/><line x1="40.5" y1="416.36" x2="924.5" y2="416.36" stroke="#d9d9d9" stroke-width="1"/><line x1="40.5" y1="438.52" x2="924.5" y2="438.52" stroke="#d9d9d9" stroke-width="1"/><line x1="40.5" y1="460.68" x2="924.5" y2="460.68" stroke="#d9d9d9" stroke-width="1"/><line x1="40.5" y1="482.84" x2="924.5" y2="482.84" stroke="#d9d9d9" stroke-width="1"/><line x1="40.5" y1="505.00" x2="924.5" y2="505.00" stroke="#d9d9d9" stroke-width="1"/><line x1="40.5" y1="527.16" x2="924.5" y2="527.16" stroke="#d9d9d9" stroke-width="1"/><line x1="40.5" y1="283.4" x2="40.5" y2="527.16" stroke="#d9d9d9" stroke-width="1"/><line x1="217.00" y1="283.4" x2="217.00" y2="538" stroke="#d9d9d9" stroke-width="1"/><line x1="287.70" y1="283.4" x2="287.70" y2="538" stroke="#d9d9d9" stroke-width="1"/><line x1="358.40" y1="283.4" x2="358.40" y2="538" stroke="#d9d9d9" stroke-width="1"/><line x1="429.10" y1="283.4" x2="429.10" y2="538" stroke="#d9d9d9" stroke-width="1"/><line x1="499.80" y1="283.4" x2="499.80" y2="538" stroke="#d9d9d9" stroke-width="1"/><line x1="570.50" y1="283.4" x2="570.50" y2="538" stroke="#d9d9d9" stroke-width="1"/><line x1="641.20" y1="283.4" x2="641.20" y2="538" stroke="#d9d9d9" stroke-width="1"/><line x1="711.90" y1="283.4" x2="711.90" y2="538" stroke="#d9d9d9" stroke-width="1"/><line x1="782.60" y1="283.4" x2="782.60" y2="538" stroke="#d9d9d9" stroke-width="1"/><line x1="853.30" y1="283.4" x2="853.30" y2="538" stroke="#d9d9d9" stroke-width="1"/><line x1="924.00" y1="283.4" x2="924.00" y2="538" stroke="#d9d9d9" stroke-width="1"/><rect x="218.50" y="284.90" width="668.12" height="22.16" fill="#000" opacity="0.28"/><rect x="217.00" y="283.40" width="668.12" height="22.16" fill="#f5ad72"/><rect x="218.50" y="307.06" width="424.20" height="22.16" fill="#000" opacity="0.28"/><rect x="217.00" y="305.56" width="424.20" height="22.16" fill="#f6b47f"/><rect x="218.50" y="329.22" width="395.92" height="22.16" fill="#000" opacity="0.28"/><rect x="217.00" y="327.72" width="395.92" height="22.16" fill="#f6bb8b"/><rect x="218.50" y="351.38" width="205.03" height="22.16" fill="#000" opacity="0.28"/><rect x="217.00" y="349.88" width="205.03" height="22.16" fill="#f7c49b"/><rect x="218.50" y="373.54" width="162.61" height="22.16" fill="#000" opacity="0.28"/><rect x="217.00" y="372.04" width="162.61" height="22.16" fill="#f8cca6"/><rect x="218.50" y="395.70" width="130.80" height="22.16" fill="#000" opacity="0.28"/><rect x="217.00" y="394.20" width="130.80" height="22.16" fill="#f9d4b3"/><rect x="218.50" y="417.86" width="123.73" height="22.16" fill="#000" opacity="0.28"/><rect x="217.00" y="416.36" width="123.73" height="22.16" fill="#fad9bc"/><rect x="218.50" y="440.02" width="120.19" height="22.16" fill="#000" opacity="0.28"/><rect x="217.00" y="438.52" width="120.19" height="22.16" fill="#fbe0c8"/><rect x="218.50" y="462.18" width="116.66" height="22.16" fill="#000" opacity="0.28"/><rect x="217.00" y="460.68" width="116.66" height="22.16" fill="#fce6d3"/><rect x="218.50" y="484.34" width="113.12" height="22.16" fill="#000" opacity="0.28"/><rect x="217.00" y="482.84" width="113.12" height="22.16" fill="#fcede0"/><rect x="218.50" y="506.50" width="14.14" height="22.16" fill="#000" opacity="0.28"/><rect x="217.00" y="505.00" width="14.14" height="22.16" fill="#fdf4ec"/><line x1="287.70" y1="283.40" x2="287.70" y2="305.56" stroke="#b07050" stroke-opacity="0.13" stroke-width="1"/><line x1="358.40" y1="283.40" x2="358.40" y2="305.56" stroke="#b07050" stroke-opacity="0.13" stroke-width="1"/><line x1="429.10" y1="283.40" x2="429.10" y2="305.56" stroke="#b07050" stroke-opacity="0.13" stroke-width="1"/><line x1="499.80" y1="283.40" x2="499.80" y2="305.56" stroke="#b07050" stroke-opacity="0.13" stroke-width="1"/><line x1="570.50" y1="283.40" x2="570.50" y2="305.56" stroke="#b07050" stroke-opacity="0.13" stroke-width="1"/><line x1="641.20" y1="283.40" x2="641.20" y2="305.56" stroke="#b07050" stroke-opacity="0.13" stroke-width="1"/><line x1="711.90" y1="283.40" x2="711.90" y2="305.56" stroke="#b07050" stroke-opacity="0.13" stroke-width="1"/><line x1="782.60" y1="283.40" x2="782.60" y2="305.56" stroke="#b07050" stroke-opacity="0.13" stroke-width="1"/><line x1="853.30" y1="283.40" x2="853.30" y2="305.56" stroke="#b07050" stroke-opacity="0.13" stroke-width="1"/><line x1="287.70" y1="305.56" x2="287.70" y2="327.72" stroke="#b07050" stroke-opacity="0.13" stroke-width="1"/><line x1="358.40" y1="305.56" x2="358.40" y2="327.72" stroke="#b07050" stroke-opacity="0.13" stroke-width="1"/><line x1="429.10" y1="305.56" x2="429.10" y2="327.72" stroke="#b07050" stroke-opacity="0.13" stroke-width="1"/><line x1="499.80" y1="305.56" x2="499.80" y2="327.72" stroke="#b07050" stroke-opacity="0.13" stroke-width="1"/><line x1="570.50" y1="305.56" x2="570.50" y2="327.72" stroke="#b07050" stroke-opacity="0.13" stroke-width="1"/><line x1="287.70" y1="327.72" x2="287.70" y2="349.88" stroke="#b07050" stroke-opacity="0.13" stroke-width="1"/><line x1="358.40" y1="327.72" x2="358.40" y2="349.88" stroke="#b07050" stroke-opacity="0.13" stroke-width="1"/><line x1="429.10" y1="327.72" x2="429.10" y2="349.88" stroke="#b07050" stroke-opacity="0.13" stroke-width="1"/><line x1="499.80" y1="327.72" x2="499.80" y2="349.88" stroke="#b07050" stroke-opacity="0.13" stroke-width="1"/><line x1="570.50" y1="327.72" x2="570.50" y2="349.88" stroke="#b07050" stroke-opacity="0.13" stroke-width="1"/><line x1="287.70" y1="349.88" x2="287.70" y2="372.04" stroke="#b07050" stroke-opacity="0.13" stroke-width="1"/><line x1="358.40" y1="349.88" x2="358.40" y2="372.04" stroke="#b07050" stroke-opacity="0.13" stroke-width="1"/><line x1="287.70" y1="372.04" x2="287.70" y2="394.20" stroke="#b07050" stroke-opacity="0.13" stroke-width="1"/><line x1="358.40" y1="372.04" x2="358.40" y2="394.20" stroke="#b07050" stroke-opacity="0.13" stroke-width="1"/><line x1="287.70" y1="394.20" x2="287.70" y2="416.36" stroke="#b07050" stroke-opacity="0.13" stroke-width="1"/><line x1="287.70" y1="416.36" x2="287.70" y2="438.52" stroke="#b07050" stroke-opacity="0.13" stroke-width="1"/><line x1="287.70" y1="438.52" x2="287.70" y2="460.68" stroke="#b07050" stroke-opacity="0.13" stroke-width="1"/><line x1="287.70" y1="460.68" x2="287.70" y2="482.84" stroke="#b07050" stroke-opacity="0.13" stroke-width="1"/><line x1="287.70" y1="482.84" x2="287.70" y2="505.00" stroke="#b07050" stroke-opacity="0.13" stroke-width="1"/><line x1="217.0" y1="305.56" x2="885.12" y2="305.56" stroke="#906040" stroke-opacity="0.25" stroke-width="1"/><line x1="217.0" y1="327.72" x2="641.20" y2="327.72" stroke="#906040" stroke-opacity="0.25" stroke-width="1"/><line x1="217.0" y1="349.88" x2="612.92" y2="349.88" stroke="#906040" stroke-opacity="0.25" stroke-width="1"/><line x1="217.0" y1="372.04" x2="422.03" y2="372.04" stroke="#906040" stroke-opacity="0.25" stroke-width="1"/><line x1="217.0" y1="394.20" x2="379.61" y2="394.20" stroke="#906040" stroke-opacity="0.25" stroke-width="1"/><line x1="217.0" y1="416.36" x2="347.80" y2="416.36" stroke="#906040" stroke-opacity="0.25" stroke-width="1"/><line x1="217.0" y1="438.52" x2="340.73" y2="438.52" stroke="#906040" stroke-opacity="0.25" stroke-width="1"/><line x1="217.0" y1="460.68" x2="337.19" y2="460.68" stroke="#906040" stroke-opacity="0.25" stroke-width="1"/><line x1="217.0" y1="482.84" x2="333.65" y2="482.84" stroke="#906040" stroke-opacity="0.25" stroke-width="1"/><line x1="217.0" y1="505.00" x2="330.12" y2="505.00" stroke="#906040" stroke-opacity="0.25" stroke-width="1"/></svg><div class="t" style="left:47px;top:226.99px;font-size:11px;font-weight:bold;color:#333;letter-spacing:0.2px">1.</div><div class="t" style="right:1151px;top:226.99px;font-size:11px;font-weight:bold;color:#2a2a2a;letter-spacing:0.15px">United States</div><div class="t" style="left:47px;top:249.15px;font-size:11px;font-weight:bold;color:#333;letter-spacing:0.2px">2.</div><div class="t" style="right:1151px;top:249.15px;font-size:11px;font-weight:bold;color:#2a2a2a;letter-spacing:0.15px">United Kingdom</div><div class="t" style="left:47px;top:271.31px;font-size:11px;font-weight:bold;color:#333;letter-spacing:0.2px">3.</div><div class="t" style="right:1151px;top:271.31px;font-size:11px;font-weight:bold;color:#2a2a2a;letter-spacing:0.15px">China</div><div class="t" style="left:47px;top:293.47px;font-size:11px;font-weight:bold;color:#333;letter-spacing:0.2px">4.</div><div class="t" style="right:1151px;top:293.47px;font-size:11px;font-weight:bold;color:#2a2a2a;letter-spacing:0.15px">Brazil</div><div class="t" style="left:47px;top:315.63px;font-size:11px;font-weight:bold;color:#333;letter-spacing:0.2px">5.</div><div class="t" style="right:1151px;top:315.63px;font-size:11px;font-weight:bold;color:#2a2a2a;letter-spacing:0.15px">Greece</div><div class="t" style="left:47px;top:337.79px;font-size:11px;font-weight:bold;color:#333;letter-spacing:0.2px">6.</div><div class="t" style="right:1151px;top:337.79px;font-size:11px;font-weight:bold;color:#2a2a2a;letter-spacing:0.15px">Germany</div><div class="t" style="left:47px;top:359.95px;font-size:11px;font-weight:bold;color:#333;letter-spacing:0.2px">7.</div><div class="t" style="right:1151px;top:359.95px;font-size:11px;font-weight:bold;color:#2a2a2a;letter-spacing:0.15px">Malaysia</div><div class="t" style="left:47px;top:382.11px;font-size:11px;font-weight:bold;color:#333;letter-spacing:0.2px">8.</div><div class="t" style="right:1151px;top:382.11px;font-size:11px;font-weight:bold;color:#2a2a2a;letter-spacing:0.15px">Netherlands</div><div class="t" style="left:47px;top:404.27px;font-size:11px;font-weight:bold;color:#333;letter-spacing:0.2px">9.</div><div class="t" style="right:1151px;top:404.27px;font-size:11px;font-weight:bold;color:#2a2a2a;letter-spacing:0.15px">Taiwan</div><div class="t" style="left:47px;top:426.43px;font-size:11px;font-weight:bold;color:#333;letter-spacing:0.2px">10.</div><div class="t" style="right:1151px;top:426.43px;font-size:11px;font-weight:bold;color:#2a2a2a;letter-spacing:0.15px">Australia</div><div class="t" style="left:47px;top:448.59px;font-size:11px;font-weight:bold;color:#333;letter-spacing:0.2px">11.</div><div class="t" style="right:1151px;top:448.59px;font-size:11px;font-weight:bold;color:#2a2a2a;letter-spacing:0.15px">Russian Federation</div><div class="t" style="left:17.0px;width:400px;text-align:center;top:484.84px;font-size:12px;color:#222;-webkit-text-stroke:0;letter-spacing:0.1px">0</div><div class="t" style="left:87.69999999999999px;width:400px;text-align:center;top:484.84px;font-size:12px;color:#222;-webkit-text-stroke:0;letter-spacing:0.1px">20</div><div class="t" style="left:158.39999999999998px;width:400px;text-align:center;top:484.84px;font-size:12px;color:#222;-webkit-text-stroke:0;letter-spacing:0.1px">40</div><div class="t" style="left:229.10000000000002px;width:400px;text-align:center;top:484.84px;font-size:12px;color:#222;-webkit-text-stroke:0;letter-spacing:0.1px">60</div><div class="t" style="left:299.8px;width:400px;text-align:center;top:484.84px;font-size:12px;color:#222;-webkit-text-stroke:0;letter-spacing:0.1px">80</div><div class="t" style="left:370.5px;width:400px;text-align:center;top:484.84px;font-size:12px;color:#222;-webkit-text-stroke:0;letter-spacing:0.1px">100</div><div class="t" style="left:441.20000000000005px;width:400px;text-align:center;top:484.84px;font-size:12px;color:#222;-webkit-text-stroke:0;letter-spacing:0.1px">120</div><div class="t" style="left:511.9000000000001px;width:400px;text-align:center;top:484.84px;font-size:12px;color:#222;-webkit-text-stroke:0;letter-spacing:0.1px">140</div><div class="t" style="left:582.6px;width:400px;text-align:center;top:484.84px;font-size:12px;color:#222;-webkit-text-stroke:0;letter-spacing:0.1px">160</div><div class="t" style="left:653.3000000000001px;width:400px;text-align:center;top:484.84px;font-size:12px;color:#222;-webkit-text-stroke:0;letter-spacing:0.1px">180</div><div class="t" style="left:724.0px;width:400px;text-align:center;top:484.84px;font-size:12px;color:#222;-webkit-text-stroke:0;letter-spacing:0.1px">200</div><div class="t" style="left:508px;top:505.84px;font-size:12px;color:#1e1e1e;letter-spacing:0.2px;-webkit-text-stroke:0">Number of documents</div>
<div class="a" style="left:945px;top:216px;width:398px;height:408px;background:#fff"></div>
<div class="a" style="left:945px;top:216px;width:382px;height:25px;background:#a9d1d0;border-bottom:1px solid #3f9f9f"></div>
<div class="a" style="left:1327px;top:216px;width:16px;height:25px;background:#a9d1d0;border-bottom:1px solid #3f9f9f"></div>
<div class="a" style="left:945px;top:216px;width:1px;height:408px;background:#3f9f9f"></div>
<div class="a" style="left:992px;top:216px;width:1px;height:25px;background:#3f9f9f"></div>
<div class="a" style="left:1212px;top:216px;width:1px;height:25px;background:#3f9f9f"></div>
<div class="a" style="left:1327px;top:216px;width:1px;height:25px;background:#3f9f9f"></div>
<div class="t" style="left:1000px;top:221.84px;font-size:12px;font-weight:bold;color:#111">Country</div>
<div class="t" style="left:1230px;top:221.84px;font-size:12px;font-weight:bold;color:#111">Documents</div>
<svg class="a" style="left:1313px;top:224px" width="8" height="8" viewBox="0 0 8 8"><path d="M0,0.5 H7.5 L3.75,7 Z" fill="#111"/></svg>
<div class="a" style="left:946px;top:241px;width:381px;height:29px;background:#f6f6f6"></div>
<div class="a" style="left:962px;top:245px;width:14px;height:14px;background:linear-gradient(#fdfdfd,#e2e2e2);border:1px solid #707070"></div>
<svg class="a" style="left:963px;top:245px" width="13" height="13" viewBox="0 0 13 13"><path d="M2.6,6.8 L5.2,10.2 L10.6,1.8" fill="none" stroke="#1e2838" stroke-width="2" stroke-linejoin="round"/></svg>
<div class="t" style="left:1000px;top:246.84px;font-size:12px;color:#1e1e1e;letter-spacing:0.18px;-webkit-text-stroke:0">United States</div>
<div class="t" style="left:1070.5px;width:400px;text-align:center;top:248.84px;font-size:12px;color:#1e1e1e;letter-spacing:0.2px;-webkit-text-stroke:0"><u>189</u></div>
<div class="a" style="left:946px;top:270px;width:381px;height:29px;background:#fff"></div>
<div class="a" style="left:962px;top:274px;width:14px;height:14px;background:linear-gradient(#fdfdfd,#e2e2e2);border:1px solid #707070"></div>
<svg class="a" style="left:963px;top:274px" width="13" height="13" viewBox="0 0 13 13"><path d="M2.6,6.8 L5.2,10.2 L10.6,1.8" fill="none" stroke="#1e2838" stroke-width="2" stroke-linejoin="round"/></svg>
<div class="t" style="left:1000px;top:275.84px;font-size:12px;color:#1e1e1e;letter-spacing:0.18px;-webkit-text-stroke:0">United Kingdom</div>
<div class="t" style="left:1070.5px;width:400px;text-align:center;top:277.84px;font-size:12px;color:#1e1e1e;letter-spacing:0.2px;-webkit-text-stroke:0"><u>120</u></div>
<div class="a" style="left:946px;top:299px;width:381px;height:29px;background:#f6f6f6"></div>
<div class="a" style="left:962px;top:303px;width:14px;height:14px;background:linear-gradient(#fdfdfd,#e2e2e2);border:1px solid #707070"></div>
<svg class="a" style="left:963px;top:303px" width="13" height="13" viewBox="0 0 13 13"><path d="M2.6,6.8 L5.2,10.2 L10.6,1.8" fill="none" stroke="#1e2838" stroke-width="2" stroke-linejoin="round"/></svg>
<div class="t" style="left:1000px;top:304.84px;font-size:12px;color:#1e1e1e;letter-spacing:0.18px;-webkit-text-stroke:0">China</div>
<div class="t" style="left:1070.5px;width:400px;text-align:center;top:306.84px;font-size:12px;color:#1e1e1e;letter-spacing:0.2px;-webkit-text-stroke:0"><u>112</u></div>
<div class="a" style="left:946px;top:328px;width:381px;height:29px;background:#fff"></div>
<div class="a" style="left:962px;top:332px;width:14px;height:14px;background:linear-gradient(#fdfdfd,#e2e2e2);border:1px solid #707070"></div>
<svg class="a" style="left:963px;top:332px" width="13" height="13" viewBox="0 0 13 13"><path d="M2.6,6.8 L5.2,10.2 L10.6,1.8" fill="none" stroke="#1e2838" stroke-width="2" stroke-linejoin="round"/></svg>
<div class="t" style="left:1000px;top:333.84px;font-size:12px;color:#1e1e1e;letter-spacing:0.18px;-webkit-text-stroke:0">Brazil</div>
<div class="t" style="left:1070.5px;width:400px;text-align:center;top:335.84px;font-size:12px;color:#1e1e1e;letter-spacing:0.2px;-webkit-text-stroke:0"><u>58</u></div>
<div class="a" style="left:946px;top:357px;width:381px;height:29px;background:#f6f6f6"></div>
<div class="a" style="left:962px;top:361px;width:14px;height:14px;background:linear-gradient(#fdfdfd,#e2e2e2);border:1px solid #707070"></div>
<svg class="a" style="left:963px;top:361px" width="13" height="13" viewBox="0 0 13 13"><path d="M2.6,6.8 L5.2,10.2 L10.6,1.8" fill="none" stroke="#1e2838" stroke-width="2" stroke-linejoin="round"/></svg>
<div class="t" style="left:1000px;top:362.84px;font-size:12px;color:#1e1e1e;letter-spacing:0.18px;-webkit-text-stroke:0">Greece</div>
<div class="t" style="left:1070.5px;width:400px;text-align:center;top:364.84px;font-size:12px;color:#1e1e1e;letter-spacing:0.2px;-webkit-text-stroke:0"><u>46</u></div>
<div class="a" style="left:946px;top:386px;width:381px;height:29px;background:#fff"></div>
<div class="a" style="left:962px;top:390px;width:14px;height:14px;background:linear-gradient(#fdfdfd,#e2e2e2);border:1px solid #707070"></div>
<svg class="a" style="left:963px;top:390px" width="13" height="13" viewBox="0 0 13 13"><path d="M2.6,6.8 L5.2,10.2 L10.6,1.8" fill="none" stroke="#1e2838" stroke-width="2" stroke-linejoin="round"/></svg>
<div class="t" style="left:1000px;top:391.84px;font-size:12px;color:#1e1e1e;letter-spacing:0.18px;-webkit-text-stroke:0">Germany</div>
<div class="t" style="left:1070.5px;width:400px;text-align:center;top:393.84px;font-size:12px;color:#1e1e1e;letter-spacing:0.2px;-webkit-text-stroke:0"><u>37</u></div>
<div class="a" style="left:946px;top:415px;width:381px;height:29px;background:#f6f6f6"></div>
<div class="a" style="left:962px;top:419px;width:14px;height:14px;background:linear-gradient(#fdfdfd,#e2e2e2);border:1px solid #707070"></div>
<svg class="a" style="left:963px;top:419px" width="13" height="13" viewBox="0 0 13 13"><path d="M2.6,6.8 L5.2,10.2 L10.6,1.8" fill="none" stroke="#1e2838" stroke-width="2" stroke-linejoin="round"/></svg>
<div class="t" style="left:1000px;top:420.84px;font-size:12px;color:#1e1e1e;letter-spacing:0.18px;-webkit-text-stroke:0">Malaysia</div>
<div class="t" style="left:1070.5px;width:400px;text-align:center;top:422.84px;font-size:12px;color:#1e1e1e;letter-spacing:0.2px;-webkit-text-stroke:0"><u>35</u></div>
<div class="a" style="left:946px;top:444px;width:381px;height:29px;background:#fff"></div>
<div class="a" style="left:962px;top:448px;width:14px;height:14px;background:linear-gradient(#fdfdfd,#e2e2e2);border:1px solid #707070"></div>
<svg class="a" style="left:963px;top:448px" width="13" height="13" viewBox="0 0 13 13"><path d="M2.6,6.8 L5.2,10.2 L10.6,1.8" fill="none" stroke="#1e2838" stroke-width="2" stroke-linejoin="round"/></svg>
<div class="t" style="left:1000px;top:449.84px;font-size:12px;color:#1e1e1e;letter-spacing:0.18px;-webkit-text-stroke:0">Netherlands</div>
<div class="t" style="left:1070.5px;width:400px;text-align:center;top:451.84px;font-size:12px;color:#1e1e1e;letter-spacing:0.2px;-webkit-text-stroke:0"><u>34</u></div>
<div class="a" style="left:946px;top:473px;width:381px;height:29px;background:#f6f6f6"></div>
<div class="a" style="left:962px;top:477px;width:14px;height:14px;background:linear-gradient(#fdfdfd,#e2e2e2);border:1px solid #707070"></div>
<svg class="a" style="left:963px;top:477px" width="13" height="13" viewBox="0 0 13 13"><path d="M2.6,6.8 L5.2,10.2 L10.6,1.8" fill="none" stroke="#1e2838" stroke-width="2" stroke-linejoin="round"/></svg>
<div class="t" style="left:1000px;top:478.84px;font-size:12px;color:#1e1e1e;letter-spacing:0.18px;-webkit-text-stroke:0">Taiwan</div>
<div class="t" style="left:1070.5px;width:400px;text-align:center;top:480.84px;font-size:12px;color:#1e1e1e;letter-spacing:0.2px;-webkit-text-stroke:0"><u>33</u></div>
<div class="a" style="left:946px;top:502px;width:381px;height:29px;background:#fff"></div>
<div class="a" style="left:962px;top:506px;width:14px;height:14px;background:linear-gradient(#fdfdfd,#e2e2e2);border:1px solid #707070"></div>
<svg class="a" style="left:963px;top:506px" width="13" height="13" viewBox="0 0 13 13"><path d="M2.6,6.8 L5.2,10.2 L10.6,1.8" fill="none" stroke="#1e2838" stroke-width="2" stroke-linejoin="round"/></svg>
<div class="t" style="left:1000px;top:507.84px;font-size:12px;color:#1e1e1e;letter-spacing:0.18px;-webkit-text-stroke:0">Australia</div>
<div class="t" style="left:1070.5px;width:400px;text-align:center;top:509.84px;font-size:12px;color:#1e1e1e;letter-spacing:0.2px;-webkit-text-stroke:0"><u>32</u></div>
<div class="a" style="left:946px;top:531px;width:381px;height:29px;background:#f6f6f6"></div>
<div class="a" style="left:962px;top:535px;width:14px;height:14px;background:linear-gradient(#fdfdfd,#e2e2e2);border:1px solid #707070"></div>
<div class="t" style="left:1000px;top:536.84px;font-size:12px;color:#1e1e1e;letter-spacing:0.18px;-webkit-text-stroke:0">Spain</div>
<div class="t" style="left:1070.5px;width:400px;text-align:center;top:538.84px;font-size:12px;color:#1e1e1e;letter-spacing:0.2px;-webkit-text-stroke:0"><u>25</u></div>
<div class="a" style="left:946px;top:560px;width:381px;height:29px;background:#fff"></div>
<div class="a" style="left:962px;top:564px;width:14px;height:14px;background:linear-gradient(#fdfdfd,#e2e2e2);border:1px solid #707070"></div>
<div class="t" style="left:1000px;top:565.84px;font-size:12px;color:#1e1e1e;letter-spacing:0.18px;-webkit-text-stroke:0">Iran</div>
<div class="t" style="left:1070.5px;width:400px;text-align:center;top:567.84px;font-size:12px;color:#1e1e1e;letter-spacing:0.2px;-webkit-text-stroke:0"><u>24</u></div>
<div class="a" style="left:946px;top:589px;width:381px;height:29px;background:#f6f6f6"></div>
<div class="a" style="left:962px;top:593px;width:14px;height:14px;background:linear-gradient(#fdfdfd,#e2e2e2);border:1px solid #707070"></div>
<div class="t" style="left:1000px;top:594.84px;font-size:12px;color:#1e1e1e;letter-spacing:0.18px;-webkit-text-stroke:0">Mexico</div>
<div class="t" style="left:1070.5px;width:400px;text-align:center;top:596.84px;font-size:12px;color:#1e1e1e;letter-spacing:0.2px;-webkit-text-stroke:0"><u>24</u></div>
<div class="a" style="left:946px;top:618px;width:381px;height:29px;background:#fff"></div>
<div class="a" style="left:962px;top:622px;width:14px;height:14px;background:linear-gradient(#fdfdfd,#e2e2e2);border:1px solid #707070"></div>
<div class="t" style="left:1000px;top:623.84px;font-size:12px;color:#1e1e1e;letter-spacing:0.18px;-webkit-text-stroke:0">Argentina</div>
<div class="t" style="left:1070.5px;width:400px;text-align:center;top:625.84px;font-size:12px;color:#1e1e1e;letter-spacing:0.2px;-webkit-text-stroke:0"><u>22</u></div>
<div class="a" style="left:992px;top:241px;width:1px;height:383px;background:#cfcfcf"></div>
<div class="a" style="left:1212px;top:241px;width:1px;height:383px;background:#cfcfcf"></div>
<div class="a" style="left:1327px;top:241px;width:16px;height:383px;background:linear-gradient(90deg,#8e9294,#c9cbcc 45%,#e6e7e7 80%,#cfd0d0)"></div>
<div class="a" style="left:1328px;top:241px;width:14px;height:15px;background:#fff;border:1px solid #d0d0d0"></div>
<svg class="a" style="left:1332px;top:247px" width="6" height="4" viewBox="0 0 6 4"><path d="M0,4 H6 L3,0 Z" fill="#111"/></svg>
<div class="a" style="left:1328px;top:258px;width:12px;height:68px;background:linear-gradient(90deg,#fff,#f4f4f4);border:1px solid #cfcfcf;border-radius:2px"></div>
<div class="a" style="left:1331px;top:288.0px;width:5px;height:1px;background:#9a9a9a"></div>
<div class="a" style="left:1331px;top:290.5px;width:5px;height:1px;background:#9a9a9a"></div>
<div class="a" style="left:1331px;top:293.0px;width:5px;height:1px;background:#9a9a9a"></div>
<div class="a" style="left:1331px;top:295.5px;width:5px;height:1px;background:#9a9a9a"></div>
<div class="a" style="left:1343px;top:121px;width:2px;height:503px;background:#9a9a9a"></div>
<div class="t" style="left:260px;top:621.84px;font-size:12px;color:#222;letter-spacing:-0.26px">To add or remove countries in the chart, click the checkboxes in the list on the right.</div>
<div class="a" style="left:1351px;top:0px;width:15px;height:624px;background:#f0f0f0;border-left:1px solid #dadada"></div>
<div class="a" style="left:1354px;top:69px;width:10px;height:421px;background:#d7d7d7;border:1px solid #c3c3c3;border-radius:2px"></div>
</div>
<div id="shelf" class="a">
<div class="dl" style="left:4px"><svg class="a" style="left:8px;top:8px" width="18" height="17" viewBox="0 0 18 17"><path d="M4.5,0.5 H13 L16.5,4 V16.5 H4.5 Z" fill="#dfe9fa" stroke="#2a3e6a"/><path d="M13,0.5 V4 H16.5" fill="none" stroke="#2a3e6a"/><rect x="12" y="9" width="3.2" height="4.5" fill="#1e3a78"/><rect x="13" y="10.5" width="1.3" height="1.8" fill="#fff"/><rect x="0.9" y="1.6" width="9.2" height="9.2" fill="#fff" stroke="#2a8a2a" stroke-width="1.4"/><path d="M3,3.8 L8,8.6 M8,3.8 L3,8.6" stroke="#3a9a3a" stroke-width="1.6"/></svg><div class="nm" style="letter-spacing:-0.3px">Scopus_exported_refi....csv</div><div class="dv"></div><div class="ar"></div></div>
<div class="dl" style="left:212px"><svg class="a" style="left:8px;top:8px" width="18" height="17" viewBox="0 0 18 17"><path d="M4.5,0.5 H12.5 L16.5,4.5 V16.5 H4.5 Z" fill="#fff" stroke="#8e3040"/><path d="M12.5,0.5 V4.5 H16.5" fill="none" stroke="#aaa"/><rect x="0" y="2.3" width="10.5" height="4" fill="#b5121b"/><path d="M7,16 C8,13 9.5,10 10.3,6.5 C10.6,9 11.5,11.5 15.5,12.3 C12,12 9.5,12.5 7,16 Z" fill="none" stroke="#c01018" stroke-width="1.5"/></svg><div class="nm" style="letter-spacing:-0.45px">84341714.pdf</div><div class="dv"></div><div class="ar"></div></div>
<div class="dl" style="left:420px"><svg class="a" style="left:8px;top:8px" width="18" height="17" viewBox="0 0 18 17"><path d="M4.5,0.5 H12.5 L16.5,4.5 V16.5 H4.5 Z" fill="#fff" stroke="#8e3040"/><path d="M12.5,0.5 V4.5 H16.5" fill="none" stroke="#aaa"/><rect x="0" y="2.3" width="10.5" height="4" fill="#b5121b"/><path d="M7,16 C8,13 9.5,10 10.3,6.5 C10.6,9 11.5,11.5 15.5,12.3 C12,12 9.5,12.5 7,16 Z" fill="none" stroke="#c01018" stroke-width="1.5"/></svg><div class="nm" style="letter-spacing:-0.45px">84760987.pdf</div><div class="dv"></div><div class="ar"></div></div>
<div class="dl" style="left:628px"><svg class="a" style="left:8px;top:8px" width="18" height="17" viewBox="0 0 18 17"><path d="M4.5,0.5 H12.5 L16.5,4.5 V16.5 H4.5 Z" fill="#fff" stroke="#8e3040"/><path d="M12.5,0.5 V4.5 H16.5" fill="none" stroke="#aaa"/><rect x="0" y="2.3" width="10.5" height="4" fill="#b5121b"/><path d="M7,16 C8,13 9.5,10 10.3,6.5 C10.6,9 11.5,11.5 15.5,12.3 C12,12 9.5,12.5 7,16 Z" fill="none" stroke="#c01018" stroke-width="1.5"/></svg><div class="nm" style="letter-spacing:-0.45px">46036801.pdf</div><div class="dv"></div><div class="ar"></div></div>
<div class="dl" style="left:836px"><svg class="a" style="left:8px;top:8px" width="18" height="17" viewBox="0 0 18 17"><path d="M4.5,0.5 H12.5 L16.5,4.5 V16.5 H4.5 Z" fill="#fff" stroke="#8e3040"/><path d="M12.5,0.5 V4.5 H16.5" fill="none" stroke="#aaa"/><rect x="0" y="2.3" width="10.5" height="4" fill="#b5121b"/><path d="M7,16 C8,13 9.5,10 10.3,6.5 C10.6,9 11.5,11.5 15.5,12.3 C12,12 9.5,12.5 7,16 Z" fill="none" stroke="#c01018" stroke-width="1.5"/></svg><div class="nm" style="letter-spacing:-0.45px">59352413.pdf</div><div class="dv"></div><div class="ar"></div></div>
<svg class="a" style="left:1226px;top:14px" width="12" height="13" viewBox="0 0 12 13"><path d="M3.5,0 H8.5 V6 H12 L6,12.5 L0,6 H3.5 Z" fill="#6e6e6e"/></svg>
<div class="a" style="left:1245px;top:14px;font-size:12px;color:#111;text-decoration:underline;white-space:nowrap;line-height:1;letter-spacing:-0.3px">Все загрузки...</div>
<svg class="a" style="left:1342px;top:16px" width="9" height="9" viewBox="0 0 9 9"><path d="M1,1 L8,8 M8,1 L1,8" stroke="#555" stroke-width="1.7"/></svg>
</div>
<div id="taskbar" class="a">
<svg class="a" style="left:15px;top:5px" width="10" height="32" viewBox="0 0 10 32"><rect x="1" y="1" width="1.5" height="1.5" fill="#b8b8b8"/><rect x="0" y="0" width="1.5" height="1.5" fill="#2e2e2e"/><rect x="1" y="5.1" width="1.5" height="1.5" fill="#b8b8b8"/><rect x="0" y="4.1" width="1.5" height="1.5" fill="#2e2e2e"/><rect x="1" y="9.2" width="1.5" height="1.5" fill="#b8b8b8"/><rect x="0" y="8.2" width="1.5" height="1.5" fill="#2e2e2e"/><rect x="1" y="13.3" width="1.5" height="1.5" fill="#b8b8b8"/><rect x="0" y="12.3" width="1.5" height="1.5" fill="#2e2e2e"/><rect x="1" y="17.4" width="1.5" height="1.5" fill="#b8b8b8"/><rect x="0" y="16.4" width="1.5" height="1.5" fill="#2e2e2e"/><rect x="1" y="21.5" width="1.5" height="1.5" fill="#b8b8b8"/><rect x="0" y="20.5" width="1.5" height="1.5" fill="#2e2e2e"/><rect x="1" y="25.6" width="1.5" height="1.5" fill="#b8b8b8"/><rect x="0" y="24.6" width="1.5" height="1.5" fill="#2e2e2e"/><rect x="1" y="29.7" width="1.5" height="1.5" fill="#b8b8b8"/><rect x="0" y="28.7" width="1.5" height="1.5" fill="#2e2e2e"/><rect x="4.5" y="1" width="1.5" height="1.5" fill="#b8b8b8"/><rect x="3.5" y="0" width="1.5" height="1.5" fill="#2e2e2e"/><rect x="4.5" y="5.1" width="1.5" height="1.5" fill="#b8b8b8"/><rect x="3.5" y="4.1" width="1.5" height="1.5" fill="#2e2e2e"/><rect x="4.5" y="9.2" width="1.5" height="1.5" fill="#b8b8b8"/><rect x="3.5" y="8.2" width="1.5" height="1.5" fill="#2e2e2e"/><rect x="4.5" y="13.3" width="1.5" height="1.5" fill="#b8b8b8"/><rect x="3.5" y="12.3" width="1.5" height="1.5" fill="#2e2e2e"/><rect x="4.5" y="17.4" width="1.5" height="1.5" fill="#b8b8b8"/><rect x="3.5" y="16.4" width="1.5" height="1.5" fill="#2e2e2e"/><rect x="4.5" y="21.5" width="1.5" height="1.5" fill="#b8b8b8"/><rect x="3.5" y="20.5" width="1.5" height="1.5" fill="#2e2e2e"/><rect x="4.5" y="25.6" width="1.5" height="1.5" fill="#b8b8b8"/><rect x="3.5" y="24.6" width="1.5" height="1.5" fill="#2e2e2e"/><rect x="4.5" y="29.7" width="1.5" height="1.5" fill="#b8b8b8"/><rect x="3.5" y="28.7" width="1.5" height="1.5" fill="#2e2e2e"/><rect x="8" y="1" width="1.5" height="1.5" fill="#b8b8b8"/><rect x="7" y="0" width="1.5" height="1.5" fill="#2e2e2e"/><rect x="8" y="5.1" width="1.5" height="1.5" fill="#b8b8b8"/><rect x="7" y="4.1" width="1.5" height="1.5" fill="#2e2e2e"/><rect x="8" y="9.2" width="1.5" height="1.5" fill="#b8b8b8"/><rect x="7" y="8.2" width="1.5" height="1.5" fill="#2e2e2e"/><rect x="8" y="13.3" width="1.5" height="1.5" fill="#b8b8b8"/><rect x="7" y="12.3" width="1.5" height="1.5" fill="#2e2e2e"/><rect x="8" y="17.4" width="1.5" height="1.5" fill="#b8b8b8"/><rect x="7" y="16.4" width="1.5" height="1.5" fill="#2e2e2e"/><rect x="8" y="21.5" width="1.5" height="1.5" fill="#b8b8b8"/><rect x="7" y="20.5" width="1.5" height="1.5" fill="#2e2e2e"/><rect x="8" y="25.6" width="1.5" height="1.5" fill="#b8b8b8"/><rect x="7" y="24.6" width="1.5" height="1.5" fill="#2e2e2e"/><rect x="8" y="29.7" width="1.5" height="1.5" fill="#b8b8b8"/><rect x="7" y="28.7" width="1.5" height="1.5" fill="#2e2e2e"/></svg>
<div class="tb" style="left:95px;width:50px;background:rgba(255,255,255,.12);border-color:#b4b4b4"></div>
<div class="tb" style="left:218px;width:59px;background:rgba(255,255,255,.35);border-color:#e8e8e8"></div>
<div class="tb" style="left:280px;width:51px;background:rgba(255,255,255,.12);border-color:#b4b4b4"></div>
<div class="tb" style="left:342px;width:59px;background:rgba(255,255,255,.12);border-color:#b4b4b4"></div>
<div class="tb" style="left:404px;width:59px;background:rgba(255,255,255,.12);border-color:#b4b4b4"></div>
<div class="a" style="left:147px;top:2px;width:2px;height:37px;background:rgba(255,255,255,.25);border-left:1px solid #777"></div>
<div class="a" style="left:151px;top:2px;width:2px;height:37px;background:rgba(255,255,255,.25);border-left:1px solid #777"></div>
<div class="a" style="left:334px;top:2px;width:2px;height:37px;background:rgba(255,255,255,.25);border-left:1px solid #777"></div>
<div class="a" style="left:338px;top:2px;width:2px;height:37px;background:rgba(255,255,255,.25);border-left:1px solid #777"></div>
<svg class="a" style="left:46px;top:4px" width="32" height="32" viewBox="0 0 32 32"><defs><linearGradient id="ieg" x1="0" y1="0" x2="0" y2="1"><stop offset="0" stop-color="#5cc8f8"/><stop offset="1" stop-color="#1a78cc"/></linearGradient><linearGradient id="ier" x1="0" y1="0" x2="1" y2="1"><stop offset="0" stop-color="#f8d040"/><stop offset="1" stop-color="#e09a10"/></linearGradient></defs><ellipse cx="16" cy="16.5" rx="15" ry="6.5" transform="rotate(-40 16 16.5)" fill="none" stroke="url(#ier)" stroke-width="2.6"/><path fill-rule="evenodd" fill="url(#ieg)" d="M28,18.5 H11.8 C12.3,22 14.5,24 17.8,24 C20,24 21.6,23 22.6,21.5 H27.8 C26.2,26 22.5,28.5 17.6,28.5 C11,28.5 6.5,24 6.5,17.2 C6.5,10.5 11,6 17.5,6 C24,6 28,10.5 28,17 Z M11.9,14.8 H23 C22.6,11.8 20.6,10 17.5,10 C14.5,10 12.4,11.8 11.9,14.8 Z"/><path d="M6.2,24.8 C3.5,28.2 2.2,30.6 3.2,31.2 C4.6,32 9.5,29.5 14.5,25.5" fill="none" stroke="url(#ier)" stroke-width="2.6"/></svg>
<svg class="a" style="left:104px;top:5px" width="32" height="32" viewBox="0 0 32 32"><defs><linearGradient id="fdg" x1="0" y1="0" x2="0" y2="1"><stop offset="0" stop-color="#fff0b8"/><stop offset="1" stop-color="#e8c86a"/></linearGradient><linearGradient id="fbg" x1="0" y1="0" x2="0" y2="1"><stop offset="0" stop-color="#c8ecff"/><stop offset="1" stop-color="#4aa8e0"/></linearGradient></defs><path d="M1,4 H11 L13,6 H30 V27 H1 Z" fill="#dcb65a"/><rect x="3" y="5" width="10" height="5" fill="#fff"/><rect x="10" y="7" width="10" height="4" fill="#fff"/><rect x="17" y="8.5" width="11" height="3" fill="#fff"/><rect x="4" y="3" width="4" height="3" fill="#2fb040"/><rect x="11" y="5.5" width="4" height="3" fill="#d83a2a"/><rect x="19" y="7" width="4" height="3" fill="#2a8ae8"/><path d="M1,10 H31 V27 H1 Z" fill="url(#fdg)" stroke="#c8a040" stroke-width=".8"/><path d="M5,17 H27 V30 H21 V23 H11 V30 H5 Z" fill="url(#fbg)" stroke="#3a88c0" stroke-width=".8"/></svg>
<svg class="a" style="left:170px;top:4px" width="33" height="32" viewBox="0 0 33 32"><defs><linearGradient id="lng" x1="0" y1="0" x2="0" y2="1"><stop offset="0" stop-color="#1a9ae0"/><stop offset=".6" stop-color="#0a5aa8"/><stop offset="1" stop-color="#083a78"/></linearGradient></defs><rect x="0.5" y="0.5" width="32" height="25" rx="1" fill="#fafafa" stroke="#e0e0e0"/><rect x="2.5" y="2.5" width="28" height="21" fill="url(#lng)"/><path d="M2.5,15 C10,13 20,17 30.5,14 V16 C20,19 10,15 2.5,17 Z" fill="#fff" opacity=".55"/><text x="16.5" y="12.5" text-anchor="middle" font-family="Liberation Sans" font-style="italic" font-weight="bold" font-size="6.8" fill="#fff" letter-spacing="-.1">lenovo</text><path d="M12,26 H21 L24,31 H9 Z" fill="#f2f2f2"/></svg>
<svg class="a" style="left:233px;top:5px" width="30" height="30" viewBox="0 0 30 30"><defs><radialGradient id="chr" cx=".5" cy=".3" r=".7"><stop offset="0" stop-color="#f06050"/><stop offset="1" stop-color="#c8281a"/></radialGradient></defs><circle cx="15" cy="15" r="14" fill="#e8b810"/><path d="M15.00,8.40 L27.35,8.40 A14,14 0 0 0 3.11,7.61 L9.28,18.30 Z" fill="url(#chr)"/><path d="M20.72,18.30 L14.54,28.99 A14,14 0 0 0 27.35,8.40 L15.00,8.40 Z" fill="#f5c518"/><path d="M9.28,18.30 L3.11,7.61 A14,14 0 0 0 14.54,28.99 L20.72,18.30 Z" fill="#3aa84a"/><circle cx="15" cy="15" r="6.6" fill="#fff"/><circle cx="15" cy="15" r="5.1" fill="#3a86d8"/><circle cx="14" cy="13.5" r="2.5" fill="#6ab0f0" opacity=".6"/></svg>
<svg class="a" style="left:292px;top:5px" width="28" height="28" viewBox="0 0 28 28"><defs><linearGradient id="wdg" x1="0" y1="0" x2="1" y2="1"><stop offset="0" stop-color="#7ab0f0"/><stop offset="1" stop-color="#1a3a98"/></linearGradient><linearGradient id="wdw" x1="0" y1="0" x2="0" y2="1"><stop offset="0" stop-color="#4a7ae0"/><stop offset="1" stop-color="#1a4aa8"/></linearGradient></defs><rect x="0" y="0" width="28" height="28" fill="url(#wdg)"/><rect x="3" y="3" width="22" height="22" fill="#f6f8fc"/><path d="M4,6 H11 V7.5 H9.5 L11,17 L14,6 H16.5 L19,17 L20.5,7.5 H19 V6 H25 V7.5 H23.5 L20,22 H17.5 L15,12 L12,22 H9.5 L6,7.5 H4 Z" fill="url(#wdw)" transform="skewX(-10) translate(3 0)"/></svg>
<svg class="a" style="left:358px;top:6px" width="28" height="28" viewBox="0 0 28 28"><defs><linearGradient id="pbg" x1="0" y1="0" x2="1" y2="1"><stop offset="0" stop-color="#8fd0d8"/><stop offset="1" stop-color="#1f6f78"/></linearGradient></defs><rect x="0" y="0" width="28" height="28" fill="url(#pbg)"/><rect x="3" y="3" width="22" height="22" fill="#f4fafa"/><path d="M4,5 H12 C16.5,5 18,7.5 18,10.5 C18,13.8 15.8,16 12,16 H10 V21.5 H12 V23 H4 V21.5 H6 V6.5 H4 Z M10,6.5 V14.5 H11.5 C13.5,14.5 14.2,13 14.2,10.5 C14.2,8 13.5,6.5 11.5,6.5 Z" fill="#2a8a94"/><path d="M13,21 L22,10 L25,12 L17,23 Z" fill="#b8dde0" stroke="#2a7a84" stroke-width=".8"/><path d="M16,9.5 L23,11" stroke="#2a7a84" stroke-width="1"/></svg>
<svg class="a" style="left:418px;top:9px" width="33" height="25" viewBox="0 0 33 25"><defs><linearGradient id="wr1" x1="0" y1="0" x2="0" y2="1"><stop offset="0" stop-color="#e070c8"/><stop offset="1" stop-color="#8a2a80"/></linearGradient><linearGradient id="wr2" x1="0" y1="0" x2="0" y2="1"><stop offset="0" stop-color="#4a6aff"/><stop offset="1" stop-color="#1a2ab0"/></linearGradient><linearGradient id="wr3" x1="0" y1="0" x2="0" y2="1"><stop offset="0" stop-color="#5ae05a"/><stop offset="1" stop-color="#1a8a2a"/></linearGradient></defs><path d="M0,0 H25 L32,6 H7 Z" fill="#7a3a5a"/><path d="M0,0.5 L7,6 V24.5 L0,19 Z" fill="#e8e8f4"/><path d="M0,6.5 L7,12 M0,12.5 L7,18" stroke="#333" stroke-width="1"/><rect x="7" y="6" width="25" height="6" fill="url(#wr1)"/><rect x="7" y="12" width="25" height="0.8" fill="#111"/><rect x="7" y="12.8" width="25" height="5.4" fill="url(#wr2)"/><rect x="7" y="18.2" width="25" height="0.8" fill="#111"/><rect x="7" y="19" width="25" height="5.5" fill="url(#wr3)"/><path d="M13,0 H16 L21,6 V24.5 H18 V6.5 Z" fill="#c08838"/><rect x="17" y="9.5" width="5" height="5" fill="#e8e8e8" stroke="#444" stroke-width=".8"/></svg>
<div class="a" style="left:884px;top:1px;width:62px;height:39px;background:linear-gradient(135deg,#ababab,#929292 60%);border-top:1.5px solid #cfcfcf;border-left:1.5px solid #cfcfcf;border-right:1px solid #7a7a7a;border-bottom:2px solid #222;border-radius:12px 0 0 0"></div>
<svg class="a" style="left:898px;top:4px" width="34" height="32" viewBox="0 0 34 32"><defs><radialGradient id="rb" cx="0.35" cy="0.3" r="0.75"><stop offset="0" stop-color="#ff9a9a"/><stop offset="0.35" stop-color="#e82a2a"/><stop offset="1" stop-color="#8a0a0a"/></radialGradient><radialGradient id="yb" cx="0.4" cy="0.3" r="0.8"><stop offset="0" stop-color="#e8d040"/><stop offset="1" stop-color="#8a7010"/></radialGradient></defs><circle cx="17" cy="16.5" r="13.7" fill="url(#rb)"/><circle cx="16.5" cy="16" r="2" fill="#fff"/><path d="M14.5,5.5 V12 H8" fill="none" stroke="#fff" stroke-width="2.2" transform="rotate(0)"/><path d="M8,20 L14,19 L12,26" fill="none" stroke="#fff" stroke-width="2.2"/><path d="M18,27 L19.5,20 L25.5,22" fill="none" stroke="#fff" stroke-width="2.2"/><circle cx="25.2" cy="8" r="7.2" fill="url(#yb)"/><rect x="24.2" y="3" width="2.2" height="6" fill="#fff"/><rect x="24.2" y="10.5" width="2.2" height="2" fill="#fff"/></svg>
<svg class="a" style="left:953px;top:12px" width="14" height="18" viewBox="0 0 14 18"><ellipse cx="7" cy="9" rx="6.5" ry="8.5" fill="#14366e"/><path d="M4,5.5 L10,11.5 L7,14.5 V3.5 L10,6.5 L4,12.5" fill="none" stroke="#fff" stroke-width="1.2"/></svg>
<svg class="a" style="left:975px;top:13px" width="18" height="15" viewBox="0 0 18 15"><rect x="0.5" y="0.5" width="17" height="14" fill="#1e4f9a" stroke="#123"/><rect x="0.5" y="0.5" width="17" height="2" fill="#3aa0d8"/><rect x="3" y="4" width="12" height="7" fill="#fff"/><path d="M4.5,4.5 V10.5 C7,10.5 8,9 8,7.5 C8,6 7,4.5 4.5,4.5 Z M13.5,4.5 V10.5 C11,10.5 10,9 10,7.5 C10,6 11,4.5 13.5,4.5 Z" fill="#1e4f9a"/></svg>
<svg class="a" style="left:1001px;top:12px" width="14" height="17" viewBox="0 0 14 17"><rect x="0.5" y="0.5" width="13" height="16" fill="#2a1a1a" stroke="#111"/><rect x="1" y="1" width="12" height="2" fill="#d33"/><circle cx="7" cy="10" r="4" fill="none" stroke="#ddd" stroke-width="1.2"/></svg>
<svg class="a" style="left:1024px;top:12px" width="17" height="17" viewBox="0 0 17 17"><rect x="0.5" y="0.5" width="16" height="16" rx="2" fill="#111"/><circle cx="8.5" cy="7.5" r="4.5" fill="#ddd"/><circle cx="8.5" cy="7.5" r="2" fill="#3a3"/><path d="M2,13 C6,16 11,16 15,13" stroke="#5c5" stroke-width="1.5" fill="none"/></svg>
<svg class="a" style="left:1049px;top:13px" width="17" height="16" viewBox="0 0 17 16"><path d="M1,6 H14 L16,9 H3 Z" fill="#ddd"/><rect x="1" y="8" width="14" height="5" fill="#bbb"/><path d="M5,10 L8,14 L15,5" stroke="#3c3" stroke-width="2.4" fill="none"/></svg>
<svg class="a" style="left:1072px;top:12px" width="17" height="18" viewBox="0 0 17 18"><path d="M1.5,1 V17" stroke="#fff" stroke-width="1.5"/><path d="M2,2 C6,0 9,4 15,3 V10 C10,11 6,8 2,10 Z" fill="#fff"/></svg>
<svg class="a" style="left:1096px;top:12px" width="17" height="17" viewBox="0 0 17 17"><circle cx="8.5" cy="8.5" r="8" fill="#f7a00c"/><path d="M12.2,11.8 A4.4,4.4 0 1 1 12.9,8.5 V12.5" fill="none" stroke="#fff" stroke-width="2.4"/></svg>
<svg class="a" style="left:1120px;top:12px" width="17" height="17" viewBox="0 0 17 17"><rect x="0.5" y="0.5" width="16" height="16" rx="2" fill="#2a86d8" stroke="#cfe6f8" stroke-width=".8"/><path d="M0.8,12 L4,16.2 H0.8 Z" fill="#e8a030"/><rect x="5" y="2.5" width="9" height="7" fill="#fff" opacity=".9"/><path d="M7.5,4 L11.5,8 M11.5,4 L7.5,8" stroke="#2a6ab0" stroke-width="1.2"/><path d="M6,11.5 H14 M6,14 H14" stroke="#fff" stroke-width="1.3"/></svg>
<svg class="a" style="left:1145px;top:13px" width="15" height="15" viewBox="0 0 15 15"><rect x="0" y="0" width="15" height="15" fill="#c0141c"/><path d="M3,12 C5,9 7,5 7,2 C8,5 9,9 12,10 C9,10 6,11 3,12 Z" fill="none" stroke="#fff" stroke-width="1.2"/></svg>
<svg class="a" style="left:1168px;top:12px" width="17" height="17" viewBox="0 0 17 17"><rect x="1" y="6" width="4" height="4" fill="#fff"/><path d="M2,2 V6 M4,2 V6 M3,10 V16" stroke="#fff" stroke-width="1.3"/><rect x="8.5" y="3.5" width="7" height="12" fill="none" stroke="#fff" stroke-width="1.5"/><rect x="11" y="1.5" width="2" height="2" fill="#fff"/></svg>
<svg class="a" style="left:1192px;top:14px" width="17" height="13" viewBox="0 0 17 13"><g fill="#fff" stroke="#333" stroke-width=".7"><rect x="0.5" y="9.5" width="2.5" height="3"/><rect x="3.8" y="7.5" width="2.5" height="5"/><rect x="7.1" y="5.5" width="2.5" height="7"/><rect x="10.4" y="3.5" width="2.5" height="9"/><rect x="13.7" y="1.5" width="2.5" height="11"/></g></svg>
<svg class="a" style="left:1215px;top:12px" width="19" height="18" viewBox="0 0 19 18"><path d="M1,6 H4 L9,1 V17 L4,12 H1 Z" fill="#fff"/><circle cx="13.5" cy="13" r="4.5" fill="#e8141c"/><path d="M10.5,10 L16.5,16" stroke="#fff" stroke-width="1.6"/></svg>
<div class="t" style="left:1247.5px;top:15px;font-size:12px;color:#fff;letter-spacing:-1.1px">РУС</div>
<div class="t" style="left:1301px;top:7.5px;font-size:12px;color:#fff;letter-spacing:-0.8px">12:28</div>
<div class="t" style="left:1287px;top:24.5px;font-size:12px;color:#fff;letter-spacing:-0.7px">10.04.2014</div>
</div>
</body></html>
